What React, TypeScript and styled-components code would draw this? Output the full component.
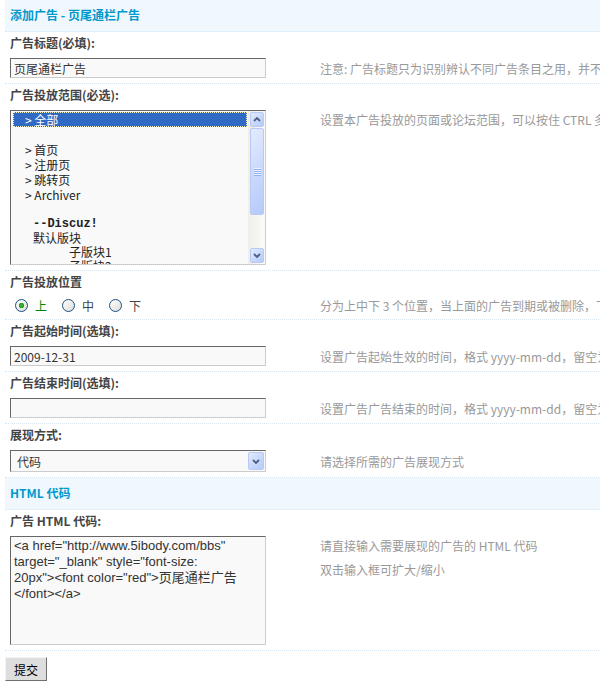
import React from 'react'
import styled, { createGlobalStyle } from 'styled-components'

const GlobalStyle = createGlobalStyle`
    html, body {
        margin: 0;
        padding: 0;
        background: #fff;
        overflow: hidden;
    }
    body {
        font: 12px/17px 'Noto Sans CJK SC', 'Liberation Sans', sans-serif;
        color: #444;
    }
`

const Page = styled.div`
    margin-left: 5px;
    width: 980px;
`

const Partition = styled.div`
    height: 31px;
    line-height: 30px;
    padding-left: 5px;
    background: #f0f7fd;
    border-bottom: 1px dotted #d6e6f3;
    color: #09c;
    font-weight: bold;
`

const LabelRow = styled.div`
    padding: 2px 5px;
    height: 17px;
    line-height: 17px;
    font-weight: bold;
`

const FieldRow = styled.div`
    display: grid;
    grid-template-columns: 310px 1fr;
    padding: 5px 0;
    border-bottom: 1px dotted #d6e6f3;
`

const FieldCell = styled.div`
    padding-left: 5px;
`

const Tip = styled.div<{ $top?: boolean }>`
    align-self: ${p => (p.$top ? 'start' : 'center')};
    padding-left: 5px;
    color: #999;
    white-space: nowrap;
`

const TipLine = styled.div`
    line-height: 20px;
    & + & {
        margin-top: 4px;
    }
`

const TextInput = styled.input`
    display: block;
    box-sizing: border-box;
    width: 256px;
    height: 20px;
    margin: 0;
    padding: 0 3px;
    border: 1px solid;
    border-color: #666 #ccc #ccc #666;
    background: #f9f9f9;
    font: 12px 'Noto Sans CJK SC', sans-serif;
    color: #333;
    outline: none;
`

/* multi select list */
const ListBox = styled.div`
    box-sizing: border-box;
    width: 256px;
    height: 155px;
    display: flex;
    border: 1px solid;
    border-color: #666 #ccc #ccc #666;
    background: #f9f9f9;
    overflow: hidden;
`

const OptionList = styled.div`
    flex: 1;
    padding: 1px 1px 0 2px;
    overflow: hidden;
`

const Option = styled.div<{ $indent: number; $h: number; $selected?: boolean; $group?: boolean }>`
    box-sizing: border-box;
    height: ${p => p.$h}px;
    line-height: ${p => p.$h}px;
    padding-left: ${p => p.$indent}px;
    white-space: pre;
    color: ${p => (p.$selected ? '#fff' : '#222')};
    background: ${p => (p.$selected ? '#316ac5' : 'transparent')};
    outline: ${p => (p.$selected ? '1px dotted #f2f2c0' : 'none')};
    outline-offset: -1px;
    font-family: ${p => (p.$group ? "'Liberation Mono', monospace" : "'Noto Sans CJK SC', sans-serif")};
    font-weight: ${p => (p.$group ? 'bold' : 'normal')};
`

const ScrollTrack = styled.div`
    width: 17px;
    display: flex;
    flex-direction: column;
    background: linear-gradient(to right, #efeee7, #fbfbf8);
`

const ScrollPart = styled.div<{ $h: number }>`
    box-sizing: border-box;
    height: ${p => p.$h}px;
    margin: 1px 1px 0 2px;
    border: 1px solid #b7caf5;
    border-radius: 2px;
    background: linear-gradient(135deg, #e3ebfe 0%, #c8d7fc 55%, #b6cafa 100%);
    display: flex;
    align-items: center;
    justify-content: center;
    &:last-child {
        margin-top: auto;
        margin-bottom: 1px;
    }
`

const Grip = styled.span`
    width: 7px;
    height: 8px;
    background: repeating-linear-gradient(
        to bottom,
        #eef3fe 0,
        #eef3fe 1px,
        #8fb0f2 1px,
        #8fb0f2 2px
    );
`

/* single select */
const SelectBox = styled.div`
    box-sizing: border-box;
    width: 256px;
    height: 22px;
    display: flex;
    align-items: center;
    padding-left: 6px;
    border: 1px solid;
    border-color: #666 #ccc #ccc #666;
    background: #f9f9f9;
    color: #333;
`

const SelectValue = styled.span`
    flex: 1;
`

const DropButton = styled.span`
    box-sizing: border-box;
    width: 16px;
    height: 18px;
    margin-right: 1px;
    border: 1px solid #b7caf5;
    border-radius: 2px;
    background: linear-gradient(135deg, #e3ebfe 0%, #c8d7fc 55%, #b6cafa 100%);
    display: flex;
    align-items: center;
    justify-content: center;
`

/* radios */
const RadioGroup = styled.div`
    height: 17px;
    display: flex;
    align-items: center;
    padding-left: 5px;
    gap: 15px;
`

const RadioItem = styled.label<{ $checked?: boolean }>`
    display: inline-flex;
    align-items: center;
    gap: 7px;
    color: ${p => (p.$checked ? '#080' : '#444')};
`

const RadioDot = styled.span<{ $checked?: boolean }>`
    box-sizing: border-box;
    width: 13px;
    height: 13px;
    border-radius: 50%;
    border: 1px solid #1c5180;
    background: ${p =>
        p.$checked
            ? 'radial-gradient(circle at 50% 50%, #3fb83f 0, #21a121 2.5px, transparent 3px), linear-gradient(135deg, #fff, #dcdcd7)'
            : 'linear-gradient(135deg, #fff, #dcdcd7)'};
`

const CodeArea = styled.textarea`
    display: block;
    box-sizing: border-box;
    width: 256px;
    height: 109px;
    margin: 0;
    padding: 1px 3px;
    border: 1px solid;
    border-color: #666 #ccc #ccc #666;
    background: #f9f9f9;
    font: 13px/16px 'Liberation Sans', 'Noto Sans CJK SC', sans-serif;
    color: #333;
    white-space: pre;
    resize: none;
    overflow: hidden;
    outline: none;
`

const SubmitRow = styled.div`
    padding-top: 6px;
`

const SubmitButton = styled.button`
    width: 42px;
    height: 24px;
    padding: 0;
    border: 1px solid;
    border-color: #f4f4f4 #707070 #707070 #f4f4f4;
    background: #dedede;
    font: 12px 'Noto Sans CJK SC', sans-serif;
    color: #000;
`

const Chevron = ({ up }: { up?: boolean }) => (
    <svg width='8' height='5' viewBox='0 0 8 5'>
        <path
            d={up ? 'M1 4 L4 1 L7 4' : 'M1 1 L4 4 L7 1'}
            fill='none'
            stroke='#4d6185'
            strokeWidth='1.8'
        />
    </svg>
)

interface SettingProps {
    label: string
    tip: React.ReactNode
    top?: boolean
    children: React.ReactNode
}

const Setting = ({ label, tip, top, children }: SettingProps) => (
    <>
        <LabelRow>{label}</LabelRow>
        <FieldRow>
            <FieldCell>{children}</FieldCell>
            <Tip $top={top}>{tip}</Tip>
        </FieldRow>
    </>
)

const scopeOptions = [
    { text: '> 全部', indent: 12, h: 15, selected: true },
    { text: '', indent: 12, h: 15 },
    { text: '> 首页', indent: 12, h: 15 },
    { text: '> 注册页', indent: 12, h: 15 },
    { text: '> 跳转页', indent: 12, h: 15 },
    { text: '> Archiver', indent: 12, h: 15 },
    { text: '', indent: 12, h: 15 },
    { text: '--Discuz!', indent: 20, h: 14, group: true },
    { text: '默认版块', indent: 20, h: 14 },
    { text: '子版块1', indent: 56, h: 14 },
    { text: '子版块2', indent: 56, h: 14 }
]

const positions = ['上', '中', '下']

// the stored ad code, kept in the lines the editor shows
const code = [
    '<a href="http://www.5ibody.com/bbs"',
    'target="_blank" style="font-size:',
    '20px"><font color="red">页尾通栏广告',
    '</font></a>'
].join('\n')

const App = () => (
    <Page>
        <GlobalStyle />
        <Partition>添加广告 - 页尾通栏广告</Partition>

        <Setting
            label='广告标题(必填):'
            tip='注意: 广告标题只为识别辨认不同广告条目之用，并不会在广告中显示'
        >
            <TextInput defaultValue='页尾通栏广告' />
        </Setting>

        <Setting
            label='广告投放范围(必选):'
            top
            tip={<TipLine>设置本广告投放的页面或论坛范围，可以按住 CTRL 多选，选择“全部”为不限制范围</TipLine>}
        >
            <ListBox>
                <OptionList>
                    {scopeOptions.map((o, i) => (
                        <Option
                            key={i}
                            $indent={o.indent}
                            $h={o.h}
                            $selected={o.selected}
                            $group={o.group}
                        >
                            {o.text}
                        </Option>
                    ))}
                </OptionList>
                <ScrollTrack>
                    <ScrollPart $h={15}>
                        <Chevron up />
                    </ScrollPart>
                    <ScrollPart $h={87}>
                        <Grip />
                    </ScrollPart>
                    <ScrollPart $h={15}>
                        <Chevron />
                    </ScrollPart>
                </ScrollTrack>
            </ListBox>
        </Setting>

        <Setting
            label='广告投放位置'
            tip='分为上中下 3 个位置，当上面的广告到期或被删除，下面的广告将自动上移'
        >
            <RadioGroup>
                {positions.map((p, i) => (
                    <RadioItem key={p} $checked={i === 0}>
                        <RadioDot $checked={i === 0} />
                        {p}
                    </RadioItem>
                ))}
            </RadioGroup>
        </Setting>

        <Setting
            label='广告起始时间(选填):'
            tip='设置广告起始生效的时间，格式 yyyy-mm-dd，留空为不限制起始时间'
        >
            <TextInput defaultValue='2009-12-31' />
        </Setting>

        <Setting
            label='广告结束时间(选填):'
            tip='设置广告广告结束的时间，格式 yyyy-mm-dd，留空为不限制结束时间'
        >
            <TextInput defaultValue='' />
        </Setting>

        <Setting label='展现方式:' tip='请选择所需的广告展现方式'>
            <SelectBox>
                <SelectValue>代码</SelectValue>
                <DropButton>
                    <Chevron />
                </DropButton>
            </SelectBox>
        </Setting>

        <Partition>HTML 代码</Partition>

        <Setting
            label='广告 HTML 代码:'
            top
            tip={
                <>
                    <TipLine>请直接输入需要展现的广告的 HTML 代码</TipLine>
                    <TipLine>双击输入框可扩大/缩小</TipLine>
                </>
            }
        >
            <CodeArea defaultValue={code} />
        </Setting>

        <SubmitRow>
            <SubmitButton>提交</SubmitButton>
        </SubmitRow>
    </Page>
)

export default App
